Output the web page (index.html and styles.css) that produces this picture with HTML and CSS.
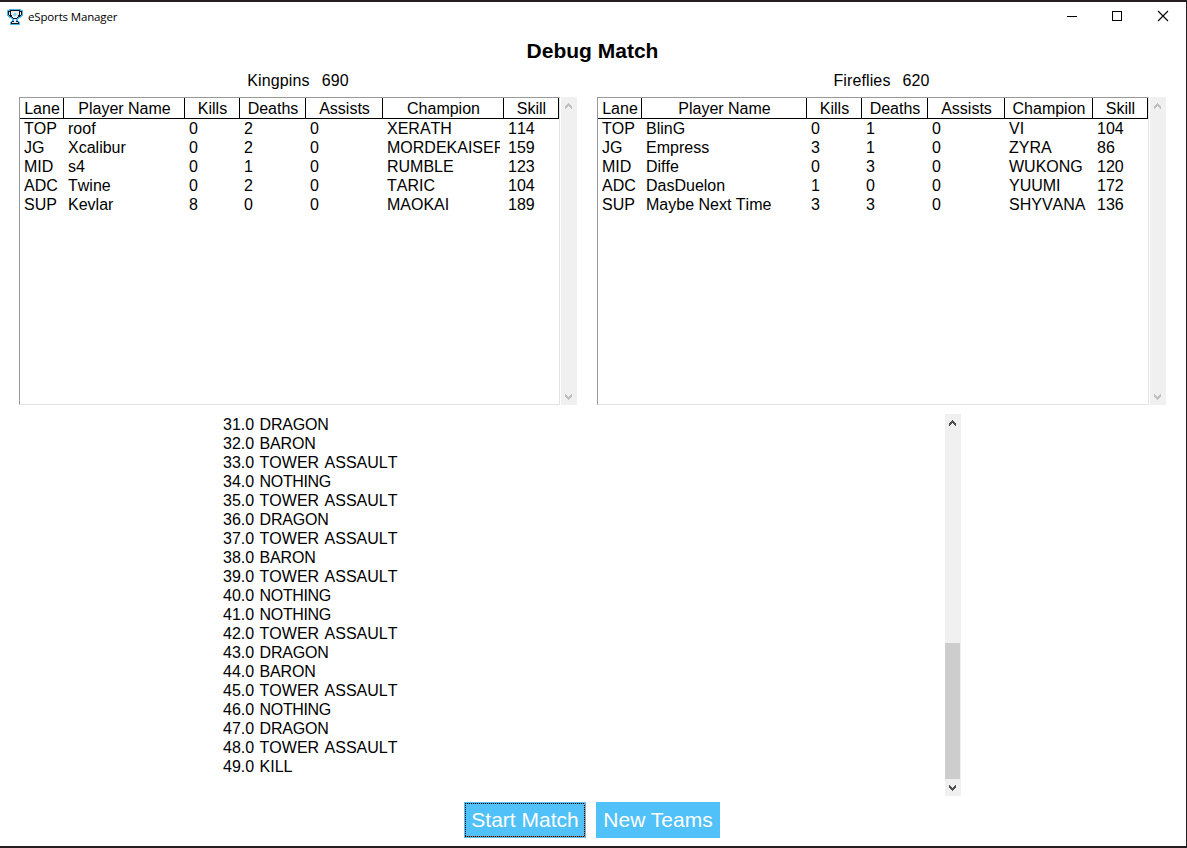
FILE: index.html
```html
<!DOCTYPE html>
<html lang="en">
<head>
<meta charset="utf-8">
<title>eSports Manager</title>
<link rel="stylesheet" href="styles.css">
</head>
<body>
<svg class="defs" width="0" height="0" aria-hidden="true">
  <symbol id="up" viewBox="0 0 7 6"><path d="M3 0h1v1h1v1h1v1h1v3h-1v-1h-1v-1h-1v-1h-1v1h-1v1h-1v1h-1v-3h1v-1h1v-1h1z"/></symbol>
  <symbol id="down" viewBox="0 0 7 6"><path d="M3 6h1v-1h1v-1h1v-1h1v-3h-1v1h-1v1h-1v1h-1v-1h-1v-1h-1v-1h-1v3h1v1h1v1h1z"/></symbol>
</svg>
<div class="window">
  <header class="titlebar">
    <svg class="logo" viewBox="0 0 16 16" width="16" height="16">
      <path fill="#48b8ec" d="M2 0h12v1h2v6h-1v1h-1v1h-2v1h-1v2h1v1h1v3H3v-3h1v-1h1v-2H4V9H2V8H1V7H0V1h2z"/>
      <path fill="#10161c" d="M3 1h10v1h2v4h-1v1h-1v1h-2v1h-1v1H9v2h2v1h1v2H4v-2h1v-1h2v-2H6V9H5V8H3V7H2V6H1V2h2z"/>
      <path fill="#e4eaf0" d="M4 2h8v4h-1v2h-1v1H6V8H5V6H4zM2 3h1v3H2zM13 3h1v3h-1zM7 10h2v3h2v1H5v-1h2z"/>
      <path fill="#8fd0ee" d="M7 4h2v1h1v1H9v1H7V6H6V5h1z"/>
    </svg>
    <span class="app-name">eSports Manager</span>
    <svg class="controls" viewBox="0 0 106 12" width="106" height="12">
      <path d="M1 6.5h10M46.500 1.500h9v9h-9z" fill="none" stroke="#000" shape-rendering="crispEdges"/>
      <path d="M92 1l10 10M102 1L92 11" fill="none" stroke="#000" stroke-width="1.100"/>
    </svg>
  </header>
  <h1 class="title">Debug Match</h1>
  <main class="teams">
    <section class="team team-a">
      <div class="team-head"><span>Kingpins</span><span>690</span></div>
      <div class="table-wrap">
        <div class="table">
          <div class="row head"><b>Lane</b><b>Player Name</b><b>Kills</b><b>Deaths</b><b>Assists</b><b>Champion</b><b>Skill</b></div>
          <div class="row"><i>TOP</i><i>roof</i><i>0</i><i>2</i><i>0</i><i>XERATH</i><i>114</i></div>
          <div class="row"><i>JG</i><i>Xcalibur</i><i>0</i><i>2</i><i>0</i><i>MORDEKAISER</i><i>159</i></div>
          <div class="row"><i>MID</i><i>s4</i><i>0</i><i>1</i><i>0</i><i>RUMBLE</i><i>123</i></div>
          <div class="row"><i>ADC</i><i>Twine</i><i>0</i><i>2</i><i>0</i><i>TARIC</i><i>104</i></div>
          <div class="row"><i>SUP</i><i>Kevlar</i><i>8</i><i>0</i><i>0</i><i>MAOKAI</i><i>189</i></div>
        </div>
        <div class="scroll idle"><svg width="7" height="6"><use href="#up"/></svg><svg width="7" height="6"><use href="#down"/></svg></div>
      </div>
    </section>
    <section class="team team-b">
      <div class="team-head"><span>Fireflies</span><span>620</span></div>
      <div class="table-wrap">
        <div class="table">
          <div class="row head"><b>Lane</b><b>Player Name</b><b>Kills</b><b>Deaths</b><b>Assists</b><b>Champion</b><b>Skill</b></div>
          <div class="row"><i>TOP</i><i>BlinG</i><i>0</i><i>1</i><i>0</i><i>VI</i><i>104</i></div>
          <div class="row"><i>JG</i><i>Empress</i><i>3</i><i>1</i><i>0</i><i>ZYRA</i><i>86</i></div>
          <div class="row"><i>MID</i><i>Diffe</i><i>0</i><i>3</i><i>0</i><i>WUKONG</i><i>120</i></div>
          <div class="row"><i>ADC</i><i>DasDuelon</i><i>1</i><i>0</i><i>0</i><i>YUUMI</i><i>172</i></div>
          <div class="row"><i>SUP</i><i>Maybe Next Time</i><i>3</i><i>3</i><i>0</i><i>SHYVANA</i><i>136</i></div>
        </div>
        <div class="scroll idle"><svg width="7" height="6"><use href="#up"/></svg><svg width="7" height="6"><use href="#down"/></svg></div>
      </div>
    </section>
  </main>
  <section class="log">
    <div class="lines">
      <p>31.0 <span class="tight">DRAGON</span></p><p>32.0 <span class="tight">BARON</span></p><p>33.0 TOWER ASSAULT</p><p>34.0 <span class="tighter">NOTHING</span></p><p>35.0 TOWER ASSAULT</p>
      <p>36.0 <span class="tight">DRAGON</span></p><p>37.0 TOWER ASSAULT</p><p>38.0 <span class="tight">BARON</span></p><p>39.0 TOWER ASSAULT</p><p>40.0 <span class="tighter">NOTHING</span></p>
      <p>41.0 <span class="tighter">NOTHING</span></p><p>42.0 TOWER ASSAULT</p><p>43.0 <span class="tight">DRAGON</span></p><p>44.0 <span class="tight">BARON</span></p><p>45.0 TOWER ASSAULT</p>
      <p>46.0 <span class="tighter">NOTHING</span></p><p>47.0 <span class="tight">DRAGON</span></p><p>48.0 TOWER ASSAULT</p><p>49.0 KILL</p>
    </div>
    <div class="scroll live"><svg width="7" height="6"><use href="#up"/></svg><span class="thumb"></span><svg width="7" height="6"><use href="#down"/></svg></div>
  </section>
  <footer class="actions">
    <button class="btn start">Start Match</button>
    <button class="btn new">New Teams</button>
  </footer>
</div>
</body>
</html>
```
FILE: styles.css
```css
* { box-sizing: border-box; }
body { margin: 0; font: 16px/19px "Liberation Sans", Arial, sans-serif; font-kerning: none; color: #000; background: #fff; }
.defs { display: block; }
.window { width: 1187px; height: 848px; overflow: hidden; border: solid #231f20; border-width: 2px 1px 2px 0; display: flex; flex-direction: column; }
.titlebar { height: 30px; flex: none; display: flex; align-items: center; padding: 0 14px 0 7px; }
.logo { shape-rendering: crispEdges; flex: none; margin-top: -1px; }
.app-name { font: 11.500px/16px "Open Sans", "Noto Sans", sans-serif; margin-left: 5px; letter-spacing: -0.15px; }
.controls { margin-left: auto; margin-top: -2px; }
.title { margin: 5px 0 0; height: 28px; font-size: 21px; line-height: 28px; text-align: center; padding-right: 1px; flex: none; }
.teams { display: flex; gap: 20px; padding-left: 19px; flex: none; margin-top: 6px; }
.team-head { height: 26px; display: flex; justify-content: center; gap: 12px; letter-spacing: 0.12px; }
.table-wrap { display: flex; gap: 1px; height: 308px; }
.table { border: 1px solid; border-color: #999 #e3e3e3 #e3e3e3 #999; }
.row { display: grid; height: 19px; }
.team-a .row { grid-template-columns: 44px 121px 55px 66px 77px 121px 55px; }
.team-b .row { grid-template-columns: 44px 165px 55px 66px 77px 88px 55px; }
.row.head { height: 21px; border-bottom: 1px solid #000; }
.row b { font-weight: 400; text-align: center; border-right: 1px solid #000; line-height: 22px; height: 20px; white-space: nowrap; padding-left: 1px; }
.row i { font-style: normal; margin: 0 4px; overflow: hidden; white-space: nowrap; }
.row i:first-child { margin-right: 0; }
.scroll { width: 16px; background: #f0f0f0; display: flex; flex-direction: column; justify-content: space-between; padding: 6px 0 5px 4px; }
.scroll svg { display: block; flex: none; shape-rendering: crispEdges; }
.idle { fill: #bfbfbf; }
.live { fill: #505050; padding: 6px 0 5px; justify-content: flex-start; }
.live svg { margin-left: 4px; }
.live svg:last-child { margin-top: auto; }
.thumb { width: 15px; height: 136px; background: #cdcdcd; margin-top: 217px; }
.log { margin: 9px 0 0 223px; width: 738px; height: 382px; display: flex; justify-content: space-between; flex: none; }
.lines { padding-top: 1px; word-spacing: 1px; }
.lines p { margin: 0; }
.tight { letter-spacing: -0.2px; }
.tighter { letter-spacing: -0.35px; }
.actions { display: flex; gap: 10px; margin: 6px 0 0 464px; }
.btn { border: 0; padding: 0; height: 36px; background: #50c1f9; color: #fff; font: 21px/36px "Liberation Sans", Arial, sans-serif; white-space: nowrap; }
.start {
  width: 122px;
  background:
    repeating-linear-gradient(90deg, #000 0 1px, #50a0c8 1px 2px) 1px 1px / 120px 1px no-repeat,
    repeating-linear-gradient(90deg, #000 0 1px, #d06a38 1px 2px) 1px 34px / 120px 1px no-repeat,
    repeating-linear-gradient(#000 0 1px, #50a0c8 1px 2px) 1px 1px / 1px 34px no-repeat,
    repeating-linear-gradient(#000 0 1px, #e0703a 1px 2px) 120px 1px / 1px 34px no-repeat,
    #50c1f9;
}
.new { width: 124px; }
```
